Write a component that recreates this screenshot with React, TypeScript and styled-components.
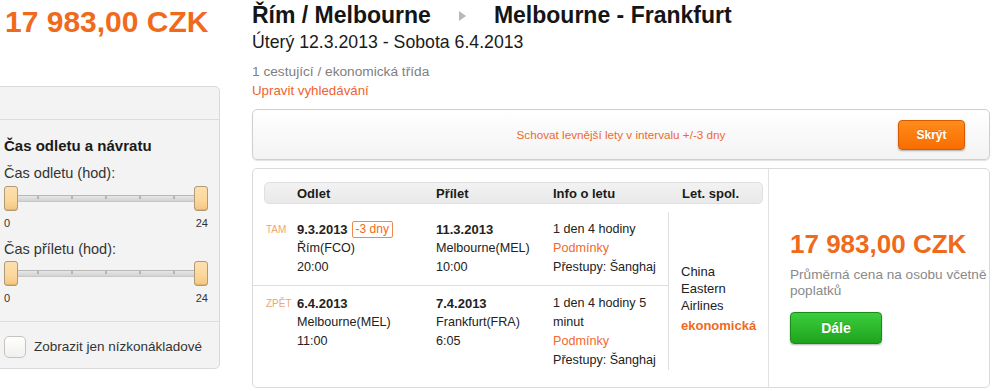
import styled, { createGlobalStyle } from "styled-components";

const GlobalStyle = createGlobalStyle`
  html, body {
    margin: 0;
    padding: 0;
    background: #fff;
    font-family: "Liberation Sans", Arial, sans-serif;
    color: #222;
    overflow: hidden;
  }
`;

const orange = "#f06a1c";

const Page = styled.div`
  display: flex;
  width: 993px;
  height: 391px;
`;

const Sidebar = styled.aside`
  width: 220px;
  flex-shrink: 0;
`;

const BigPrice = styled.div<{ $size: number }>`
  font-size: ${(p) => p.$size}px;
  line-height: 1.15;
  font-weight: bold;
  color: ${orange};
  white-space: nowrap;
`;

const TopPrice = styled(BigPrice)`
  margin: 5px 0 0 5px;
`;

const FilterPanel = styled.div`
  margin: 46px 0 0 -10px;
  width: 228px;
  background: #f4f3f3;
  border: 1px solid #d9d9d9;
  border-radius: 0 5px 5px 0;
`;

const PanelHead = styled.div`
  height: 32px;
  border-bottom: 1px solid #dcdcdc;
`;

const PanelSection = styled.div<{ $top: number; $bottom: number; $line?: boolean }>`
  padding: ${(p) => p.$top}px 13px ${(p) => p.$bottom}px 13px;
  border-bottom: ${(p) => (p.$line ? "1px solid #dcdcdc" : "none")};
`;

const PanelTitle = styled.div`
  font-size: 15px;
  font-weight: bold;
  line-height: 20px;
  color: #1a1a1a;
`;

const FieldLabel = styled.div<{ $gap: number }>`
  margin-top: ${(p) => p.$gap}px;
  font-size: 14.5px;
  line-height: 20px;
  color: #333;
`;

const Slider = styled.div<{ $gap: number }>`
  margin-top: ${(p) => p.$gap}px;
  display: flex;
  align-items: center;
  width: 204px;
  height: 25px;
`;

const Handle = styled.div`
  width: 12px;
  height: 23px;
  border: 1px solid #b09a78;
  border-radius: 3px;
  background: linear-gradient(to bottom, #fde0b0 0%, #fbd79a 60%, #f4c682 100%);
  box-shadow: inset 0 -1px 0 #e2b26b;
  flex-shrink: 0;
`;

const Track = styled.div`
  flex: 1;
  height: 5px;
  border-top: 1px solid #b8b8b8;
  border-bottom: 1px solid #c8c8c8;
  background: linear-gradient(to bottom, #e6e6e6, #d2d2d2);
  svg {
    display: block;
    width: 100%;
    height: 5px;
  }
`;

const Scale = styled.div`
  margin-top: 5px;
  width: 204px;
  display: flex;
  justify-content: space-between;
  font-size: 11px;
  line-height: 14px;
  color: #333;
`;

const CheckRow = styled.label`
  display: flex;
  align-items: center;
  gap: 8px;
  font-size: 13.5px;
  white-space: nowrap;
  color: #333;
`;

const CheckBox = styled.span`
  width: 20px;
  height: 20px;
  flex-shrink: 0;
  border: 1px solid #c8c2bc;
  border-radius: 5px;
  background: linear-gradient(to bottom, #ffffff, #f1f0ee);
`;

const Main = styled.main`
  margin-left: 32px;
  width: 738px;
`;

const Title = styled.h1`
  margin: 2px 0 0;
  display: flex;
  align-items: center;
  gap: 28px;
  font-size: 23px;
  line-height: 26px;
  font-weight: bold;
  color: #151515;
`;

const Arrow = styled.span`
  width: 0;
  height: 0;
  border-top: 5px solid transparent;
  border-bottom: 5px solid transparent;
  border-left: 7px solid #b8b8b8;
  margin-top: 1px;
`;

const Dates = styled.div`
  margin-top: 3px;
  font-size: 17.7px;
  line-height: 22px;
  color: #1a1a1a;
`;

const Passengers = styled.div`
  margin-top: 9px;
  font-size: 13.7px;
  line-height: 19px;
  color: #808080;
`;

const EditLink = styled.a`
  display: block;
  font-size: 13.3px;
  line-height: 19px;
  color: #ee6330;
  text-decoration: none;
`;

const Banner = styled.div`
  margin-top: 9px;
  height: 49px;
  border: 1px solid #cfcfcf;
  border-radius: 5px;
  background: linear-gradient(to bottom, #ffffff 0%, #f3f3f3 100%);
  box-shadow: 0 1px 1px rgba(0, 0, 0, 0.12);
  display: grid;
  grid-template-columns: 1fr auto 1fr;
  align-items: center;
`;

const BannerText = styled.span`
  grid-column: 2;
  font-size: 11.7px;
  color: #ee6a2e;
`;

const Button = styled.button<{ $tone: "orange" | "green" }>`
  font-family: inherit;
  font-weight: bold;
  color: #fff;
  border-radius: 4px;
  cursor: pointer;
  border: 1px solid ${(p) => (p.$tone === "orange" ? "#d85a00" : "#1a8a1a")};
  background: ${(p) =>
    p.$tone === "orange"
      ? "linear-gradient(to bottom, #ff8c1c 0%, #f86d00 100%)"
      : "linear-gradient(to bottom, #3ccd3c 0%, #1ea41e 100%)"};
  box-shadow: 0 1px 2px rgba(0, 0, 0, 0.3);
  text-shadow: 0 -1px 0 rgba(0, 0, 0, 0.15);
`;

const HideButton = styled(Button)`
  grid-column: 3;
  justify-self: end;
  margin-right: 24px;
  width: 67px;
  height: 30px;
  font-size: 12px;
`;

const Card = styled.div`
  margin-top: 8px;
  height: 218px;
  border: 1px solid #dadada;
  border-radius: 5px;
  display: flex;
`;

const FlightsPart = styled.div`
  width: 515px;
  flex-shrink: 0;
`;

const HeadBar = styled.div`
  margin: 13px 5px 0 11px;
  height: 20px;
  border: 1px solid #e0e0e0;
  border-radius: 5px;
  background: linear-gradient(to bottom, #f2f2f2, #e9e9e9);
  display: grid;
  grid-template-columns: 32px 139px 117px 129px 1fr;
  align-items: center;
  font-size: 13px;
  font-weight: bold;
  color: #1a1a1a;
`;

const Body = styled.div`
  margin-top: 8px;
  display: flex;
`;

const Legs = styled.div`
  width: 415px;
  flex-shrink: 0;
  padding-bottom: 9px;
`;

const Leg = styled.div<{ $last?: boolean }>`
  display: grid;
  grid-template-columns: 31px 139px 117px 1fr;
  padding: 8px 0 ${(p) => (p.$last ? 0 : 8)}px 13px;
  border-bottom: ${(p) => (p.$last ? "none" : "1px solid #dedede")};
  font-size: 12.6px;
  line-height: 19px;
  color: #222;
`;

const Direction = styled.span`
  font-size: 10px;
  color: #f0a66e;
`;

const Cell = styled.div``;

const Strong = styled.div`
  font-weight: bold;
  font-size: 13px;
  display: flex;
  align-items: center;
  gap: 4px;
`;

const ShiftBadge = styled.span`
  font-weight: normal;
  font-size: 12px;
  line-height: 15px;
  color: ${orange};
  border: 1px solid #f08a4a;
  border-radius: 2px;
  padding: 0 3px;
`;

const Conditions = styled.div`
  color: #f2682e;
`;

const Airline = styled.div`
  flex: 1;
  border-left: 1px solid #dedede;
  margin-bottom: 9px;
  padding: 14px 0 0 12px;
  display: flex;
  flex-direction: column;
  justify-content: center;
  font-size: 13px;
  line-height: 17px;
  color: #222;
`;

const CabinClass = styled.div`
  margin-top: 3px;
  font-weight: bold;
  color: ${orange};
`;

const PricePart = styled.div`
  flex: 1;
  border-left: 1px solid #e2e2e2;
  padding: 61px 0 0 21px;
`;

const PriceNote = styled.div`
  margin-top: 7px;
  width: 200px;
  font-size: 13.6px;
  line-height: 16px;
  color: #8a8a8a;
`;

const NextButton = styled(Button)`
  margin-top: 13px;
  width: 92px;
  height: 32px;
  font-size: 14px;
`;

function TimeSlider({ gap }: { gap: number }) {
  const ticks = [20, 54, 88, 122, 156];
  return (
    <>
      <Slider $gap={gap}>
        <Handle />
        <Track>
          <svg viewBox="0 0 176 5" preserveAspectRatio="none">
            {ticks.map((x) => (
              <line key={x} x1={x} y1={0} x2={x} y2={3} stroke="#8a8a8a" strokeWidth={1} />
            ))}
          </svg>
        </Track>
        <Handle />
      </Slider>
      <Scale>
        <span>0</span>
        <span>24</span>
      </Scale>
    </>
  );
}

export default function App() {
  return (
    <>
      <GlobalStyle />
      <Page>
        <Sidebar>
          <TopPrice $size={30}>17 983,00 CZK</TopPrice>
          <FilterPanel>
            <PanelHead />
            <PanelSection $top={16} $bottom={16} $line>
              <PanelTitle>Čas odletu a návratu</PanelTitle>
              <FieldLabel $gap={7}>Čas odletu (hod):</FieldLabel>
              <TimeSlider gap={3} />
              <FieldLabel $gap={9}>Čas příletu (hod):</FieldLabel>
              <TimeSlider gap={2} />
            </PanelSection>
            <PanelSection $top={14} $bottom={10}>
              <CheckRow>
                <CheckBox />
                Zobrazit jen nízkonákladové
              </CheckRow>
            </PanelSection>
          </FilterPanel>
        </Sidebar>

        <Main>
          <Title>
            <span>Řím / Melbourne</span>
            <Arrow />
            <span>Melbourne - Frankfurt</span>
          </Title>
          <Dates>Úterý 12.3.2013 - Sobota 6.4.2013</Dates>
          <Passengers>1 cestující / ekonomická třída</Passengers>
          <EditLink href="#">Upravit vyhledávání</EditLink>

          <Banner>
            <BannerText>Schovat levnější lety v intervalu +/-3 dny</BannerText>
            <HideButton $tone="orange">Skrýt</HideButton>
          </Banner>

          <Card>
            <FlightsPart>
              <HeadBar>
                <span />
                <span>Odlet</span>
                <span>Přílet</span>
                <span>Info o letu</span>
                <span>Let. spol.</span>
              </HeadBar>
              <Body>
                <Legs>
                  <Leg>
                    <Direction>TAM</Direction>
                    <Cell>
                      <Strong>
                        9.3.2013 <ShiftBadge>-3 dny</ShiftBadge>
                      </Strong>
                      <div>Řím(FCO)</div>
                      <div>20:00</div>
                    </Cell>
                    <Cell>
                      <Strong>11.3.2013</Strong>
                      <div>Melbourne(MEL)</div>
                      <div>10:00</div>
                    </Cell>
                    <Cell>
                      <div>1 den 4 hodiny</div>
                      <Conditions>Podmínky</Conditions>
                      <div>Přestupy: Šanghaj</div>
                    </Cell>
                  </Leg>
                  <Leg $last>
                    <Direction>ZPĚT</Direction>
                    <Cell>
                      <Strong>6.4.2013</Strong>
                      <div>Melbourne(MEL)</div>
                      <div>11:00</div>
                    </Cell>
                    <Cell>
                      <Strong>7.4.2013</Strong>
                      <div>Frankfurt(FRA)</div>
                      <div>6:05</div>
                    </Cell>
                    <Cell>
                      <div>1 den 4 hodiny 5 minut</div>
                      <Conditions>Podmínky</Conditions>
                      <div>Přestupy: Šanghaj</div>
                    </Cell>
                  </Leg>
                </Legs>
                <Airline>
                  <div>China</div>
                  <div>Eastern</div>
                  <div>Airlines</div>
                  <CabinClass>ekonomická</CabinClass>
                </Airline>
              </Body>
            </FlightsPart>
            <PricePart>
              <BigPrice $size={26}>17 983,00 CZK</BigPrice>
              <PriceNote>Průměrná cena na osobu včetně poplatků</PriceNote>
              <NextButton $tone="green">Dále</NextButton>
            </PricePart>
          </Card>
        </Main>
      </Page>
    </>
  );
}
